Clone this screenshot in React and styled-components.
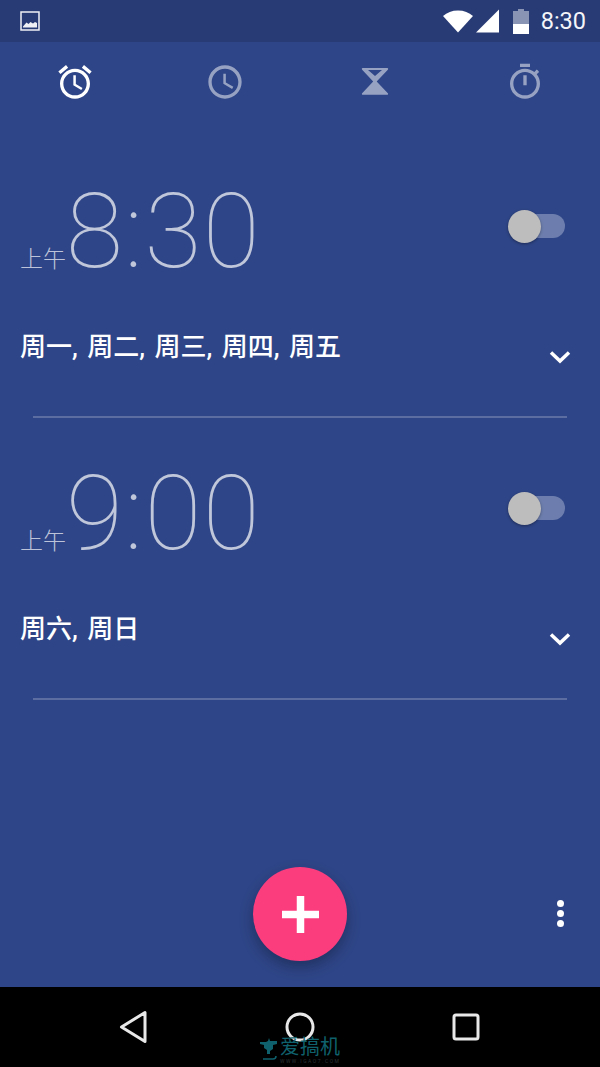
import React from 'react';
import styled, { createGlobalStyle } from 'styled-components';

const GlobalStyle = createGlobalStyle`
  html, body {
    margin: 0;
    padding: 0;
    background: #000;
  }
  * {
    box-sizing: border-box;
  }
`;

const Screen = styled.div`
  position: relative;
  width: 600px;
  height: 1067px;
  display: flex;
  flex-direction: column;
  overflow: hidden;
  background: #2e4587;
  font-family: Roboto, "Noto Sans CJK SC", sans-serif;
  color: #fff;
`;

// Status bar
const StatusBar = styled.div`
  height: 42px;
  flex: none;
  display: flex;
  align-items: center;
  padding: 0 14px 0 18px;
  background: #283b75;
`;

const StatusSpacer = styled.div`
  flex: 1;
`;

const StatusTime = styled.span`
  margin-left: 12px;
  font-size: 23.5px;
  line-height: 42px;
  color: #f4f5f9;
`;

const Glyph = styled.svg`
  display: block;
  flex: none;
  margin-left: ${(p) => p.$gap || 0}px;
`;

// Tab strip
const Tabs = styled.div`
  height: 80px;
  flex: none;
  display: grid;
  grid-template-columns: repeat(4, 150px);
  align-items: center;
  justify-items: center;
`;

const TabIcon = styled.svg`
  display: block;
  width: 40px;
  height: 40px;
  fill: #fff;
  opacity: ${(p) => (p.$active ? 1 : 0.5)};
`;

// Alarm rows
const AlarmList = styled.div`
  flex: 1;
  display: flex;
  flex-direction: column;
  padding-top: 43px;
`;

const Alarm = styled.div`
  height: 282px;
  flex: none;
  display: flex;
  flex-direction: column;
`;

const TimeRow = styled.div`
  height: 122px;
  flex: none;
  display: flex;
  align-items: center;
  justify-content: space-between;
  margin-bottom: 35px;
  padding: 0 35px 0 21px;
`;

const TimeText = styled.div`
  display: flex;
  align-items: baseline;
  padding-top: 12px;
  color: rgba(255, 255, 255, 0.7);
`;

const Meridiem = styled.span`
  font-size: 23px;
  font-weight: 300;
  line-height: 1;
  margin-left: -1px;
`;

const Clock = styled.span`
  font-size: 104px;
  font-weight: 100;
  line-height: 122px;
  letter-spacing: 1.5px;
`;

const Toggle = styled.div`
  position: relative;
  width: 55px;
  height: 24px;
  border-radius: 12px;
  background: #6d7eae;
`;

const Thumb = styled.div`
  position: absolute;
  left: -2px;
  top: -4.5px;
  width: 33px;
  height: 33px;
  border-radius: 50%;
  background: #bdbdbd;
  box-shadow: 0 1px 3px rgba(0, 0, 0, 0.35);
`;

const DaysRow = styled.div`
  height: 66px;
  flex: none;
  display: flex;
  justify-content: space-between;
  padding: 0 29px 0 20px;
`;

const Days = styled.span`
  font-size: 26px;
  font-weight: 500;
  line-height: 40px;
  margin-top: 5px;
  word-spacing: 3px;
`;

const Chevron = styled.svg`
  display: block;
  width: 22px;
  height: 14px;
  margin-top: 28px;
`;

const Divider = styled.div`
  height: 2px;
  margin: 28px 33px 0;
  background: rgba(255, 255, 255, 0.22);
`;

// Bottom actions
const ActionBar = styled.div`
  height: 120px;
  flex: none;
  display: grid;
  grid-template-columns: 1fr 94px 1fr;
  align-items: start;
`;

const Fab = styled.button`
  width: 94px;
  height: 94px;
  grid-column: 2;
  padding: 0;
  border: 0;
  border-radius: 50%;
  display: flex;
  align-items: center;
  justify-content: center;
  background: #fb3d7e;
  box-shadow: 0 6px 14px rgba(0, 0, 0, 0.28);
`;

const MenuDots = styled.div`
  justify-self: end;
  margin: 33px 36px 0 0;
  display: flex;
  flex-direction: column;
  gap: 3px;
`;

const Dot = styled.span`
  display: block;
  width: 7px;
  height: 7px;
  border-radius: 50%;
  background: #fff;
`;

// Navigation bar
const NavBar = styled.div`
  height: 80px;
  flex: none;
  display: grid;
  grid-template-columns: 80px 80px 80px;
  justify-content: center;
  column-gap: 86px;
  align-items: center;
  justify-items: center;
  background: #000;
`;

const Watermark = styled.div`
  position: absolute;
  left: 260px;
  top: 1035px;
  display: flex;
  align-items: flex-start;
  gap: 2px;
  color: #0f616d;
`;

const WatermarkText = styled.div`
  display: flex;
  flex-direction: column;
`;

const WatermarkTitle = styled.span`
  font-size: 20px;
  line-height: 24px;
`;

const WatermarkUrl = styled.span`
  font-size: 5px;
  line-height: 5px;
  letter-spacing: 1.5px;
  color: #2c3436;
`;

const TAB_PATHS = [
  'M22 5.72l-4.6-3.86-1.29 1.53 4.6 3.86L22 5.72zM7.88 3.39L6.6 1.86 2 5.71l1.29 1.53 4.59-3.85zM12.5 8H11v6l4.75 2.85.75-1.23-4-2.37V8zM12 4c-4.97 0-9 4.03-9 9s4.03 9 9 9 9-4.03 9-9-4.03-9-9-9zm0 16c-3.87 0-7-3.13-7-7s3.13-7 7-7 7 3.13 7 7-3.13 7-7 7z',
  'M11.99 2C6.47 2 2 6.48 2 12s4.47 10 9.99 10C17.52 22 22 17.52 22 12S17.52 2 11.99 2zM12 20c-4.42 0-8-3.58-8-8s3.58-8 8-8 8 3.58 8 8-3.58 8-8 8zM12.5 7H11v6l5.25 3.15.75-1.23-4.5-2.67z',
  'M4.6 3.6h14.800c.5 0 .7.6.3 1L13 11.700l6.700 7c.4.4.1 1-.4 1H4.700c-.5 0-.8-.6-.4-1l6.600-7-6.600-7.100c-.4-.4-.2-1 .3-1zM7.800 4.800l4.200 3.600 4.200-3.600z',
  'M15 1H9v2h6V1zm-4 13h2V8h-2v6zm8.03-6.61l1.42-1.42c-.43-.51-.9-.99-1.41-1.41l-1.42 1.42C16.07 4.74 14.12 4 12 4c-4.97 0-9 4.03-9 9s4.02 9 9 9 9-4.03 9-9c0-2.12-.74-4.07-1.97-5.61zM12 20c-3.87 0-7-3.13-7-7s3.13-7 7-7 7 3.13 7 7-3.13 7-7 7z',
];

const ALARMS = [
  { time: '8:30', days: '周一, 周二, 周三, 周四, 周五' },
  { time: '9:00', days: '周六, 周日' },
];

const App = () => {
  return (
    <Screen>
      <GlobalStyle />
      <StatusBar>
        <Glyph width="24" height="24" viewBox="0 0 24 24">
          <path d="M3 3h18v18H3z" fill="none" stroke="#eef0f5" strokeWidth="1.500" />
          <path d="M5 17.500l3.500-4 2 1.500 2-2 2.500 1.500 2-1.500 2 1v4.500H5z" fill="#eef0f5" />
        </Glyph>
        <StatusSpacer />
        <Glyph width="30" height="24" viewBox="0 0 30 24">
          <path d="M15 23.500L0 7C4 3.500 9 1.500 15 1.500S26 3.500 30 7z" fill="#fff" />
        </Glyph>
        <Glyph $gap={3} width="23" height="24" viewBox="0 0 23 24">
          <path d="M0 23.500L23 .500v23z" fill="#fff" />
        </Glyph>
        <Glyph $gap={14} width="16" height="25" viewBox="0 0 16 25">
          <path d="M5 0h6v2h5v13H0V2h5z" fill="#fff" fillOpacity="0.45" />
          <path d="M0 15h16v10H0z" fill="#fff" />
        </Glyph>
        <StatusTime>8:30</StatusTime>
      </StatusBar>

      <Tabs>
        {TAB_PATHS.map((d, index) => (
          <TabIcon key={index} viewBox="0 0 24 24" $active={index === 0}>
            <path d={d} fillRule="evenodd" />
          </TabIcon>
        ))}
      </Tabs>

      <AlarmList>
        {ALARMS.map((alarm) => (
          <Alarm key={alarm.time}>
            <TimeRow>
              <TimeText>
                <Meridiem>上午</Meridiem>
                <Clock>{alarm.time}</Clock>
              </TimeText>
              <Toggle>
                <Thumb />
              </Toggle>
            </TimeRow>
            <DaysRow>
              <Days>{alarm.days}</Days>
              <Chevron viewBox="0 0 22 14">
                <path d="M2 2.500l9 8.500 9-8.500" fill="none" stroke="#fff" strokeWidth="3.500" />
              </Chevron>
            </DaysRow>
            <Divider />
          </Alarm>
        ))}
      </AlarmList>

      <ActionBar>
        <Fab aria-label="add">
          <svg width="37" height="37" viewBox="0 0 37 37">
            <path d="M14.750 0h7.500v14.750H37v7.500H22.250V37h-7.500V22.250H0v-7.500h14.750z" fill="#fff" />
          </svg>
        </Fab>
        <MenuDots>
          <Dot />
          <Dot />
          <Dot />
        </MenuDots>
      </ActionBar>

      <NavBar>
        <svg width="30" height="34" viewBox="0 0 30 34">
          <path d="M26 2.500v29L2.500 17z" fill="none" stroke="#e8e8e8" strokeWidth="3" strokeLinejoin="round" />
        </svg>
        <svg width="30" height="30" viewBox="0 0 30 30">
          <circle cx="15" cy="15" r="13" fill="none" stroke="#e8e8e8" strokeWidth="3" />
        </svg>
        <svg width="28" height="28" viewBox="0 0 28 28">
          <rect x="2" y="2" width="24" height="24" rx="2" fill="none" stroke="#e8e8e8" strokeWidth="3" />
        </svg>
      </NavBar>

      <Watermark>
        <svg width="18" height="26" viewBox="0 0 18 26">
          <path d="M0 7h6l2-1 1-3 1 3h7v3l-4 1v4l-3 2v3H7v-4L4 13V10L0 9z" fill="#0f616d" />
          <path d="M3 24h10c2 0 3-1 3-3" stroke="#0f616d" strokeWidth="1.500" fill="none" />
        </svg>
        <WatermarkText>
          <WatermarkTitle>爱搞机</WatermarkTitle>
          <WatermarkUrl>WWW.IGAO7.COM</WatermarkUrl>
        </WatermarkText>
      </Watermark>
    </Screen>
  );
};

export default App;
